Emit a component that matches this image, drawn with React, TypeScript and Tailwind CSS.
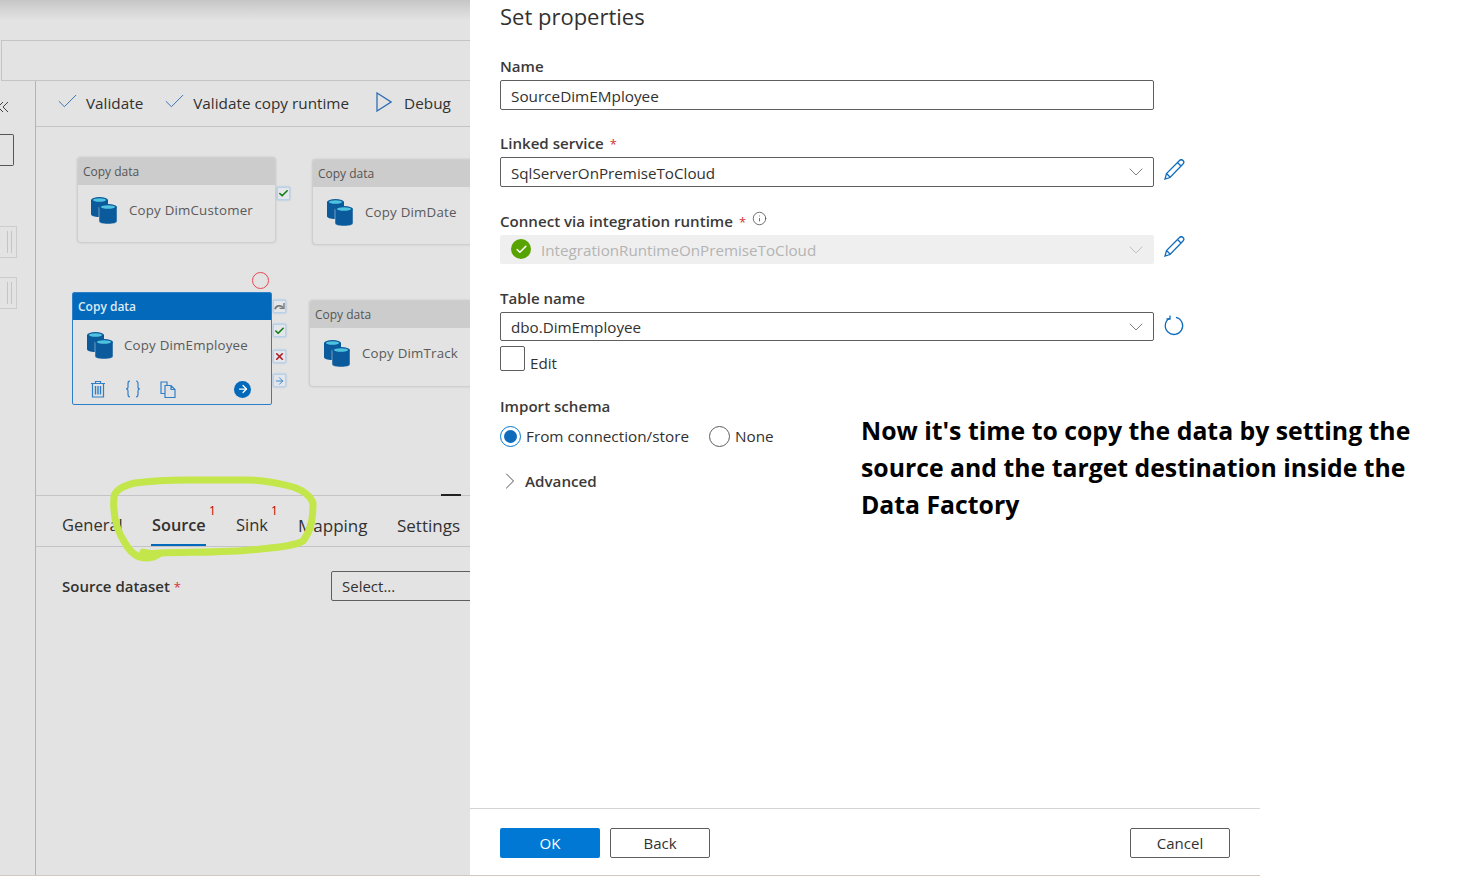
import { Check, ChevronDown, ChevronRight, Info, X, ArrowRight } from "lucide-react";

const font = "font-['Open_Sans',sans-serif]";

function DbIcon() {
    return (
        <svg width="28" height="30" viewBox="0 0 28 30" className="shrink-0">
            <path d="M1 4v14c0 2 3 3 8.500 3s8.500-1 8.500-3V4z" fill="#0a5a9c" />
            <ellipse cx="9.500" cy="4" rx="8.500" ry="3" fill="#0a5a9c" />
            <ellipse cx="9.500" cy="4" rx="6.500" ry="1.800" fill="#4fc3de" />
            <path d="M9 11v14c0 2 3 3 9 3s9-1 9-3V11z" fill="#0a5a9c" stroke="#e3e3e3" strokeWidth="0.500" />
            <ellipse cx="18" cy="11" rx="9" ry="3" fill="#0a5a9c" />
            <ellipse cx="18" cy="11" rx="7" ry="1.800" fill="#4fc3de" />
        </svg>
    );
}

function TrashIcon() {
    return (
        <svg width="16" height="18" viewBox="0 0 16 18" fill="none" stroke="#2f7fc8" strokeWidth="1.200">
            <path d="M1 3.500h14M5.500 3.500V1.500h5v2M2.500 3.500v13.500h11V3.500" />
            <path d="M5.500 6v8.500M8 6v8.500M10.500 6v8.500" strokeWidth="1.400" />
        </svg>
    );
}

function BracesIcon() {
    return (
        <svg width="16" height="18" viewBox="0 0 16 18" fill="none" stroke="#2f7fc8" strokeWidth="1.200">
            <path d="M5 1C3 1 3 2 3 4v3c0 1-.8 2-2 2 1.200 0 2 1 2 2v3c0 2 0 3 2 3" />
            <path d="M11 1c2 0 2 1 2 3v3c0 1 .8 2 2 2-1.200 0-2 1-2 2v3c0 2 0 3-2 3" />
        </svg>
    );
}

function PagesIcon() {
    return (
        <svg width="16" height="17" viewBox="0 0 16 17" fill="none" stroke="#2f7fc8" strokeWidth="1.200">
            <path d="M5 12.500H1V1h6v4" />
            <path d="M5 4.500h6l4 4v8H5zM11 4.500v4h4" />
        </svg>
    );
}

function PencilIcon() {
    return (
        <svg width="21" height="21" viewBox="0 0 21 21" fill="none" stroke="#0f6cbd" strokeWidth="1.300" className="ml-[10px] -mt-[6px]">
            <path d="M1 20l1.500-5.500L15.500 1.500c1-1 2.500-1 3.500 0s1 2.500 0 3.500L6 18.500zM2.500 14.500l4 4M13.500 3.500l4 4" />
        </svg>
    );
}

function RefreshIcon() {
    return (
        <svg width="21" height="21" viewBox="0 0 21 21" fill="none" stroke="#0f6cbd" strokeWidth="1.300" className="ml-[10px] -mt-[3px]">
            <path d="M12 2.300a8.700 8.700 0 1 1-6.500 1" />
            <path d="M6 .500v3.500H2.500" />
        </svg>
    );
}

function ActivityNode({ title, className, inset }: { title: string; className: string; inset: string }) {
    return (
        <div className={`absolute bg-[#e3e3e3] border border-[#cfcfcf] rounded-sm shadow-[0_0_2px_rgba(0,0,0,0.15)] overflow-hidden ${className}`}>
            <div className="h-[27px] bg-[#cccccc] px-[5px] pt-[1px] flex items-center text-[12px] text-[#555]">Copy data</div>
            <div className={`flex items-center gap-[11px] pt-[11px] ${inset}`}>
                <DbIcon />
                <span className="text-[13.300px] text-[#5a5a5a] tracking-[0.2px] whitespace-nowrap">{title}</span>
            </div>
        </div>
    );
}

function SideButton({ children, className }: { children: React.ReactNode; className: string }) {
    return (
        <div className={`absolute w-[13px] h-[13px] flex items-center justify-center border border-[#b9d2ea] bg-[#e3e7ec] rounded-[1px] shadow-[0_0_2px_#7fb0e0] ${className}`}>
            {children}
        </div>
    );
}

function Field({ label, required, info, children }: { label: string; required?: boolean; info?: boolean; children: React.ReactNode }) {
    return (
        <div>
            <div className="h-[20px] pt-[2px] flex items-center text-[15.100px] font-semibold text-[#3b3a39] leading-none whitespace-nowrap">
                {label}
                {required && <span className="text-[#d13438] ml-[6px] text-[13px] font-normal">*</span>}
                {info && <Info className="w-[15px] h-[15px] ml-[6px] -mt-[7px] text-[#444]" strokeWidth={1.2} />}
            </div>
            {children}
        </div>
    );
}

function SelectBox({ value, height, trailing }: { value: string; height: string; trailing: React.ReactNode }) {
    return (
        <div className="flex items-center mt-[4px]">
            <div className={`w-[654px] border border-[#605e5c] rounded-[2px] flex items-center justify-between pl-[10px] pr-[5px] text-[15.200px] text-[#323130] ${height}`}>
                <span className="pt-[2px]">{value}</span>
                <ChevronDown className="w-[24px] h-[24px] text-[#605e5c]" strokeWidth={0.8} />
            </div>
            {trailing}
        </div>
    );
}

export default function App() {
    return (
        <div className={`w-[1483px] h-[877px] relative overflow-hidden flex bg-white ${font}`}>
            {/* LEFT: dimmed pipeline editor */}
            <div className="w-[470px] h-[876px] shrink-0 bg-[#e3e3e3] flex flex-col overflow-hidden border-b border-[#cfc9c0]">
                <div className="h-[40px] bg-gradient-to-b from-[#c6c6c6] to-[#e3e3e3] to-50%" />
                <div className="h-[41px] ml-[1px] border border-r-0 border-[#c4c4c4]" />

                <div className="flex-1 flex min-h-0">
                    {/* collapsed sidebar */}
                    <div className="w-[36px] shrink-0 border-r border-[#b4b4b4] overflow-hidden">
                        <svg width="8" height="12" viewBox="0 0 8 12" fill="none" stroke="#444" strokeWidth="1" className="mt-[20px]">
                            <path d="M3 1 -2 6l5 5M8 1 3 6l5 5" />
                        </svg>
                        <div className="w-[14px] h-[32px] border border-l-0 border-[#555] rounded-r-[2px] mt-[21px]" />
                        <div className="w-[17px] h-[32px] border border-l-0 border-[#cccccc] mt-[60px] flex justify-end gap-[3px] pr-[4px]">
                            <span className="w-px bg-[#c4c4c4] my-[4px]" />
                            <span className="w-px bg-[#c4c4c4] my-[4px]" />
                        </div>
                        <div className="w-[17px] h-[32px] border border-l-0 border-[#cccccc] mt-[19px] flex justify-end gap-[3px] pr-[4px]">
                            <span className="w-px bg-[#c4c4c4] my-[4px]" />
                            <span className="w-px bg-[#c4c4c4] my-[4px]" />
                        </div>
                    </div>

                    <div className="flex-1 flex flex-col min-w-0">
                        {/* toolbar */}
                        <div className="h-[46px] shrink-0 border-b border-[#c4c4c4] flex items-center pl-[19px] text-[15.300px] text-[#323130] whitespace-nowrap">
                            <Check className="w-[25px] h-[25px] text-[#2f6fb5] -mt-[4px]" strokeWidth={0.9} />
                            <span className="ml-[6px]">Validate</span>
                            <Check className="w-[25px] h-[25px] ml-[19px] text-[#2f6fb5] -mt-[4px]" strokeWidth={0.9} />
                            <span className="ml-[6px]">Validate copy runtime</span>
                            <svg width="16" height="20" viewBox="0 0 16 20" fill="none" stroke="#2f6fb5" strokeWidth="1.300" className="ml-[27px] -mt-[4px]">
                                <path d="M1 1v18l14-9z" />
                            </svg>
                            <span className="ml-[12px]">Debug</span>
                        </div>

                        {/* canvas */}
                        <div className="h-[369px] shrink-0 relative border-b border-[#c4c4c4]">
                            <ActivityNode title="Copy DimCustomer" inset="pl-[12px]" className="left-[41px] top-[30px] w-[199px] h-[86px]" />
                            <ActivityNode title="Copy DimDate" inset="pl-[13px]" className="left-[276px] top-[32px] w-[200px] h-[86px]" />
                            <ActivityNode title="Copy DimTrack" inset="pl-[13px]" className="left-[273px] top-[173px] w-[200px] h-[87px]" />

                            <SideButton className="left-[241px] top-[60px]">
                                <Check className="w-[11px] h-[11px] text-[#107c10]" strokeWidth={3.5} />
                            </SideButton>

                            {/* selected activity */}
                            <div className="absolute left-[36px] top-[165px] w-[200px] h-[113px] border border-[#2f7fc8] rounded-[2px] overflow-hidden bg-[#e3e3e3]">
                                <div className="h-[27px] bg-[#0369bb] px-[5px] flex items-center text-[12px] font-semibold text-[#dce9f5]">Copy data</div>
                                <div className="flex items-center gap-[10px] pl-[13px] pt-[11px]">
                                    <DbIcon />
                                    <span className="text-[13.300px] text-[#5a5a5a] tracking-[0.2px] whitespace-nowrap">Copy DimEmployee</span>
                                </div>
                                <div className="flex items-center pl-[17px] mt-[19px]">
                                    <TrashIcon />
                                    <span className="ml-[19px]"><BracesIcon /></span>
                                    <span className="ml-[19px]"><PagesIcon /></span>
                                    <div className="w-[17px] h-[17px] ml-[58px] rounded-full bg-[#0369bb] flex items-center justify-center">
                                        <ArrowRight className="w-[12px] h-[12px] text-white" strokeWidth={2.5} />
                                    </div>
                                </div>
                            </div>
                            <div className="absolute left-[216px] top-[145px] w-[17px] h-[17px] rounded-full border-[1.500px] border-[#e8484d]" />
                            <SideButton className="left-[237px] top-[173px]">
                                <svg width="11" height="9" viewBox="0 0 12 10" fill="none" stroke="#777" strokeWidth="2">
                                    <path d="M1 8c1-4 6-5 9-2" />
                                    <path d="M11 1v6H6" strokeWidth="1.500" />
                                </svg>
                            </SideButton>
                            <SideButton className="left-[237px] top-[197px]">
                                <Check className="w-[12px] h-[12px] text-[#107c10]" strokeWidth={3.5} />
                            </SideButton>
                            <SideButton className="left-[237px] top-[223px]">
                                <X className="w-[13px] h-[13px] text-[#b01c24]" strokeWidth={3.5} />
                            </SideButton>
                            <SideButton className="left-[237px] top-[247px]">
                                <ArrowRight className="w-[12px] h-[12px] text-[#2f7fc8]" strokeWidth={2} />
                            </SideButton>
                            <div className="absolute left-[405px] bottom-[-1px] w-[20px] h-[2px] bg-[#222]" />
                        </div>

                        {/* tabs */}
                        <div className="h-[51px] shrink-0 border-b border-[#c4c4c4] flex items-end pl-[26px] text-[17px] text-[#323130] whitespace-nowrap">
                            <span className="h-[41px] w-[60px] pt-[8px] text-[16.500px]">General</span>
                            <span className="relative h-[41px] w-[55px] ml-[29px] pt-[8px] text-[16.300px] font-semibold border-b-2 border-[#0369bb]">
                                <span className="pl-[1px]">Source</span>
                                <sup className="absolute left-[58px] top-[6px] text-[12px] font-normal text-[#c00000]">1</sup>
                            </span>
                            <span className="relative h-[41px] w-[32px] ml-[30px] pt-[8px] text-[16.500px]">
                                Sink
                                <sup className="absolute left-[35px] top-[6px] text-[12px] text-[#c00000]">1</sup>
                            </span>
                            <span className="h-[41px] w-[69px] ml-[30px] pt-[8px]">Mapping</span>
                            <span className="h-[41px] ml-[30px] pt-[8px]">Settings</span>
                        </div>

                        {/* source dataset */}
                        <div className="flex items-center pl-[26px] pt-[24px] whitespace-nowrap">
                            <span className="w-[269px] shrink-0 text-[15px] font-semibold text-[#323130]">
                                Source dataset <span className="text-[#d13438] text-[13px] font-normal">*</span>
                            </span>
                            <div className="w-[200px] h-[30px] shrink-0 border border-[#605e5c] rounded-[2px] pl-[10px] flex items-center text-[15px] text-[#323130]">Select...</div>
                        </div>
                    </div>
                </div>
            </div>

            {/* RIGHT: set properties dialog */}
            <div className="w-[790px] h-[876px] shrink-0 flex flex-col border-b border-[#cfc9c0]">
                <div className="flex-1 pl-[30px]">
                    <h2 className="text-[22px] leading-[32px] text-[#323130] font-medium">Set properties</h2>

                    <div className="mt-[24px]">
                        <Field label="Name">
                            <div className="mt-[4px] w-[654px] h-[30px] border border-[#605e5c] rounded-[2px] pl-[10px] pt-[2px] flex items-center text-[15.300px] text-[#323130]">SourceDimEMployee</div>
                        </Field>
                    </div>
                    <div className="mt-[23px]">
                        <Field label="Linked service" required>
                            <SelectBox value="SqlServerOnPremiseToCloud" height="h-[30px]" trailing={<PencilIcon />} />
                        </Field>
                    </div>
                    <div className="mt-[24px]">
                        <Field label="Connect via integration runtime" required info>
                            <div className="flex items-center mt-[4px]">
                                <div className="w-[654px] h-[29px] bg-[#efefef] rounded-[2px] flex items-center justify-between pl-[11px] pr-[6px] text-[15.200px] text-[#b4b4b4]">
                                    <span className="flex items-center gap-[10px]">
                                        <span className="w-[20px] h-[20px] rounded-full bg-[#57a300] flex items-center justify-center">
                                            <Check className="w-[13px] h-[13px] text-white" strokeWidth={3} />
                                        </span>
                                        <span className="pt-[1px]">IntegrationRuntimeOnPremiseToCloud</span>
                                    </span>
                                    <ChevronDown className="w-[24px] h-[24px] text-[#b4b4b4]" strokeWidth={0.8} />
                                </div>
                                <PencilIcon />
                            </div>
                        </Field>
                    </div>
                    <div className="mt-[24px]">
                        <Field label="Table name">
                            <SelectBox value="dbo.DimEmployee" height="h-[29px]" trailing={<RefreshIcon />} />
                        </Field>
                    </div>
                    <div className="flex items-end mt-[5px] text-[15.200px] text-[#323130]">
                        <div className="w-[25px] h-[25px] border border-[#605e5c] rounded-[2px]" />
                        <span className="ml-[5px] leading-[20px] -mb-[2px]">Edit</span>
                    </div>

                    <div className="mt-[25px]">
                        <Field label="Import schema">
                            <div className="flex items-center mt-[9px] text-[15.300px] text-[#323130]">
                                <span className="w-[21px] h-[21px] rounded-full border border-[#0078d4] flex items-center justify-center">
                                    <span className="w-[13px] h-[13px] rounded-full bg-[#0f6cbd]" />
                                </span>
                                <span className="ml-[5px]">From connection/store</span>
                                <span className="w-[21px] h-[21px] rounded-full border border-[#605e5c] ml-[20px]" />
                                <span className="ml-[5px]">None</span>
                            </div>
                        </Field>
                    </div>
                    <div className="flex items-center mt-[22px] text-[15.200px] font-semibold text-[#3b3a39]">
                        <ChevronRight className="w-[28px] h-[28px] -ml-[4px] -my-[4px] text-[#444]" strokeWidth={0.8} />
                        <span className="ml-[1px]">Advanced</span>
                    </div>
                </div>

                {/* footer */}
                <div className="h-[67px] shrink-0 border-t border-[#d4d4d4] flex items-center px-[30px] pt-[2px] text-[15px]">
                    <button className="w-[100px] h-[30px] pt-[1px] bg-[#0078d4] rounded-[2px] text-white">OK</button>
                    <button className="w-[100px] h-[30px] pt-[1px] ml-[10px] border border-[#605e5c] rounded-[2px] text-[#323130]">Back</button>
                    <button className="w-[100px] h-[30px] pt-[1px] ml-auto border border-[#605e5c] rounded-[2px] text-[#323130]">Cancel</button>
                </div>
            </div>

            {/* annotation drawn over the screenshot */}
            <p className="absolute left-[861px] top-[412px] w-[560px] text-[24.800px] leading-[37px] font-bold text-black">
                Now it's time to copy the data by setting the source and the target destination inside the Data Factory
            </p>

            {/* green marker scribble */}
            <svg className="absolute left-0 top-0 pointer-events-none" width="470" height="877" fill="none">
                <path
                    d="M143 552 C150 554 154 554 160 553 C200 552 235 552 250 550 C275 548 295 546 303 541 C310 532 313 522 313 503 C310 495 302 490 293 487 C275 482 262 480 247 480 L187 480 C165 480 150 481 135 483 C122 486 115 490 114 497 C113 510 115 528 125 543 C130 552 137 558 146 558 C152 558 156 556 159 554"
                    stroke="#c3e64a"
                    strokeWidth="7"
                    strokeLinecap="round"
                />
            </svg>
        </div>
    );
}
